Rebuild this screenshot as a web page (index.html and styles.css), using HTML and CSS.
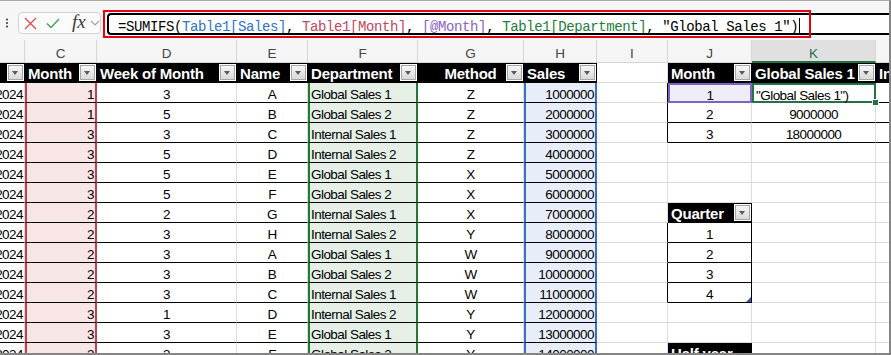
FILE: index.html
```html
<!DOCTYPE html>
<html>
<head>
<meta charset="utf-8">
<link rel="stylesheet" href="styles.css">
</head>
<body>
<div class="frame">
  <div class="fbar">
    <svg class="grip" width="18" height="39" viewBox="0 0 18 39"><circle cx="7" cy="18.5" r="1.1" fill="#444"/><circle cx="7" cy="22" r="1.1" fill="#444"/><circle cx="7" cy="25.5" r="1.1" fill="#444"/></svg>
    <div class="fbox">
      <svg class="ix" width="13" height="13" viewBox="0 0 13 13"><path d="M1 1 L12 12 M12 1 L1 12" stroke="#e5484d" stroke-width="1.3" fill="none"/></svg>
      <svg class="ic" width="14" height="11" viewBox="0 0 14 11"><path d="M1 5.5 L5 9.5 L13 1" stroke="#3f9c50" stroke-width="1.3" fill="none"/></svg>
      <span class="fx">fx</span>
      <svg class="ich" width="10" height="6" viewBox="0 0 10 6"><path d="M1 1 L5 5 L9 1" stroke="#a3a3a3" stroke-width="1.2" fill="none"/></svg>
    </div>
    <div class="finput"><span>=SUMIFS(</span><span class="f1">Table1[Sales]</span>, <span class="f2">Table1[Month]</span>, <span class="f3">[@Month]</span>, <span class="f4">Table1[Department]</span>, "Global Sales 1")<span class="caret"></span></div>
  </div>
  <div class="annot"></div>
  <div class="sheet">
    <div class="grid">
      <!-- column letters -->
      <div class="c h">B</div><div class="c h">C</div><div class="c h">D</div><div class="c h">E</div><div class="c h">F</div><div class="c h">G</div><div class="c h">H</div><div class="c h">I</div><div class="c h">J</div><div class="c h hs">K</div><div class="c h">L</div>
      <!-- table header -->
      <div class="c th"><span class="dd"></span></div>
      <div class="c th">Month<span class="dd"></span></div>
      <div class="c th">Week of Month<span class="dd"></span></div>
      <div class="c th">Name<span class="dd"></span></div>
      <div class="c th">Department<span class="dd"></span></div>
      <div class="c th thc">Method<span class="dd"></span></div>
      <div class="c th">Sales<span class="dd"></span></div>
      <div class="c"></div>
      <div class="c th">Month<span class="dd"></span></div>
      <div class="c th">Global Sales 1<span class="dd"></span></div>
      <div class="c th">Internal Sales 1</div>
      <!-- row 1 -->
      <div class="c t r">2024</div><div class="c t r mo">1</div><div class="c t m">3</div><div class="c t m">A</div><div class="c t l de">Global Sales 1</div><div class="c t m">Z</div><div class="c t r sa">1000000</div>
      <div class="c bk"></div><div class="c t m pu">1</div><div class="c act">"Global Sales 1")</div><div class="c t"></div>
      <!-- row 2 -->
      <div class="c t r">2024</div><div class="c t r mo">1</div><div class="c t m">5</div><div class="c t m">B</div><div class="c t l de">Global Sales 2</div><div class="c t m">Z</div><div class="c t r sa">2000000</div>
      <div class="c bk"></div><div class="c t m">2</div><div class="c t m">9000000</div><div class="c t"></div>
      <!-- row 3 -->
      <div class="c t r">2024</div><div class="c t r mo">3</div><div class="c t m">3</div><div class="c t m">C</div><div class="c t l de">Internal Sales 1</div><div class="c t m">Z</div><div class="c t r sa">3000000</div>
      <div class="c bk"></div><div class="c t m">3</div><div class="c t m">18000000</div><div class="c t"></div>
      <!-- row 4 -->
      <div class="c t r">2024</div><div class="c t r mo">3</div><div class="c t m">5</div><div class="c t m">D</div><div class="c t l de">Internal Sales 2</div><div class="c t m">Z</div><div class="c t r sa">4000000</div>
      <div class="c"></div><div class="c"></div><div class="c"></div><div class="c"></div>
      <!-- row 5 -->
      <div class="c t r">2024</div><div class="c t r mo">3</div><div class="c t m">5</div><div class="c t m">E</div><div class="c t l de">Global Sales 1</div><div class="c t m">X</div><div class="c t r sa">5000000</div>
      <div class="c"></div><div class="c"></div><div class="c"></div><div class="c"></div>
      <!-- row 6 -->
      <div class="c t r">2024</div><div class="c t r mo">3</div><div class="c t m">5</div><div class="c t m">F</div><div class="c t l de">Global Sales 2</div><div class="c t m">X</div><div class="c t r sa">6000000</div>
      <div class="c"></div><div class="c"></div><div class="c"></div><div class="c"></div>
      <!-- row 7 -->
      <div class="c t r">2024</div><div class="c t r mo">2</div><div class="c t m">2</div><div class="c t m">G</div><div class="c t l de">Internal Sales 1</div><div class="c t m">X</div><div class="c t r sa">7000000</div>
      <div class="c"></div><div class="c th">Quarter<span class="dd"></span></div><div class="c"></div><div class="c"></div>
      <!-- row 8 -->
      <div class="c t r">2024</div><div class="c t r mo">2</div><div class="c t m">3</div><div class="c t m">H</div><div class="c t l de">Internal Sales 2</div><div class="c t m">Y</div><div class="c t r sa">8000000</div>
      <div class="c bk"></div><div class="c t m bk">1</div><div class="c"></div><div class="c"></div>
      <!-- row 9 -->
      <div class="c t r">2024</div><div class="c t r mo">2</div><div class="c t m">3</div><div class="c t m">A</div><div class="c t l de">Global Sales 1</div><div class="c t m">W</div><div class="c t r sa">9000000</div>
      <div class="c bk"></div><div class="c t m bk">2</div><div class="c"></div><div class="c"></div>
      <!-- row 10 -->
      <div class="c t r">2024</div><div class="c t r mo">2</div><div class="c t m">3</div><div class="c t m">B</div><div class="c t l de">Global Sales 2</div><div class="c t m">W</div><div class="c t r sa">10000000</div>
      <div class="c bk"></div><div class="c t m bk">3</div><div class="c"></div><div class="c"></div>
      <!-- row 11 -->
      <div class="c t r">2024</div><div class="c t r mo">2</div><div class="c t m">3</div><div class="c t m">C</div><div class="c t l de">Internal Sales 1</div><div class="c t m">W</div><div class="c t r sa">11000000</div>
      <div class="c bk"></div><div class="c t m bk qe">4</div><div class="c"></div><div class="c"></div>
      <!-- row 12 -->
      <div class="c t r">2024</div><div class="c t r mo">3</div><div class="c t m">1</div><div class="c t m">D</div><div class="c t l de">Internal Sales 2</div><div class="c t m">Y</div><div class="c t r sa">12000000</div>
      <div class="c"></div><div class="c"></div><div class="c"></div><div class="c"></div>
      <!-- row 13 -->
      <div class="c t r">2024</div><div class="c t r mo">3</div><div class="c t m">3</div><div class="c t m">E</div><div class="c t l de">Global Sales 1</div><div class="c t m">Y</div><div class="c t r sa">13000000</div>
      <div class="c"></div><div class="c"></div><div class="c"></div><div class="c"></div>
      <!-- row 14 -->
      <div class="c t r">2024</div><div class="c t r mo">3</div><div class="c t m">3</div><div class="c t m">F</div><div class="c t l de">Global Sales 2</div><div class="c t m">Y</div><div class="c t r sa">14000000</div>
      <div class="c"></div><div class="c th">Half year</div><div class="c"></div><div class="c"></div>
    </div>
  </div>
</div>
</body>
</html>
```
FILE: styles.css
```css
body {
  margin: 0;
  background: #fff;
}

.frame {
  width: 891px;
  height: 355px;
  box-sizing: border-box;
  border-top: 1px solid #a9a9a9;
  border-right: 2px solid #858585;
  border-bottom: 2px solid #858585;
  position: relative;
  overflow: hidden;
  font-family: "Liberation Sans", Arial, sans-serif;
}

/* formula bar */
.fbar {
  height: 39px;
  display: flex;
  align-items: flex-start;
  background: #f6f6f6;
}

.grip {
  flex: none;
}

.fbox {
  flex: none;
  margin-top: 11px;
  width: 83px;
  height: 22px;
  box-sizing: border-box;
  border: 1px solid #d4d4d4;
  border-radius: 4px;
  background: #fbfbfb;
  display: flex;
  align-items: center;
  padding-left: 5px;
}

.ix {
  margin-right: 9px;
}

.ic {
  margin-right: 12px;
}

.fx {
  font-family: "Liberation Serif", serif;
  font-style: italic;
  font-size: 19px;
  line-height: 18px;
  color: #3a3a3a;
  margin-right: 4px;
  margin-top: -2px;
}

.finput {
  flex: 1;
  margin-top: 12px;
  margin-left: 6px;
  height: 22px;
  box-sizing: border-box;
  border: 2px solid #000;
  border-right: none;
  border-radius: 4px 0 0 4px;
  background: #fff;
  padding: 3px 0 0 9px;
  font-family: "Liberation Mono", monospace;
  font-size: 14px;
  line-height: 15px;
  letter-spacing: -0.4px;
  white-space: pre;
  color: #000;
  overflow: hidden;
}

.f1 { color: #2f73c9; }
.f2 { color: #c2475a; }
.f3 { color: #8b62c6; }
.f4 { color: #1d7e3c; }

.caret {
  display: inline-block;
  width: 1px;
  height: 16px;
  background: #000;
  vertical-align: -3px;
  margin-left: 1px;
}

.annot {
  position: absolute;
  left: 103px;
  top: 9px;
  width: 708px;
  height: 28px;
  box-sizing: border-box;
  border: 2px solid #e60012;
}

/* sheet */
.sheet {
  height: 313px;
  overflow: hidden;
}

.grid {
  display: grid;
  grid-template-columns: 60px 72px 140px 71px 110px 106px 73px 71px 84px 124px 40px;
  grid-template-rows: 23px;
  grid-auto-rows: 20px;
  margin-left: -35px;
  width: 951px;
}

.c {
  box-sizing: border-box;
  border-right: 1px solid #dcdcdc;
  border-bottom: 1px solid #dcdcdc;
  white-space: nowrap;
  overflow: hidden;
  position: relative;
  font-size: 13.5px;
  line-height: 15px;
  letter-spacing: -0.55px;
  padding: 4px 2px 0 2px;
  color: #000;
}

.h {
  background: #f5f5f5;
  border-color: #d6d6d6;
  text-align: center;
  font-size: 13.5px;
  letter-spacing: 0;
  padding-top: 6px;
  color: #454545;
}

.hs {
  background: #e0e0e0;
  color: #1d6f46;
  border-bottom: 2px solid #217346;
}

.th {
  background: #000;
  border-color: #000;
  color: #fff;
  font-weight: bold;
  font-size: 15px;
  letter-spacing: -0.2px;
  padding: 3px 3px 0 3px;
}

.thc {
  text-align: center;
}

.dd {
  position: absolute;
  right: 1px;
  top: 2px;
  width: 15px;
  height: 15px;
  box-sizing: border-box;
  background: linear-gradient(#f6f6f6, #d9d9d9);
  border: 1px solid #a6a6a6;
  box-shadow: 0 0 0 1px #fff;
}

.dd::after {
  content: "";
  position: absolute;
  left: 3px;
  top: 5px;
  border-left: 3.5px solid transparent;
  border-right: 3.5px solid transparent;
  border-top: 4px solid #5a5a5a;
}

.t {
  border-bottom-color: #000;
}

.l { text-align: left; }
.m { text-align: center; }
.r { text-align: right; padding-right: 1px; }

.mo {
  background: #f8e5e6;
  border-left: 2px solid #c4404c;
  border-right: 2px solid #c4404c;
}

.de {
  background: #e5efe6;
  border-left: 2px solid #1e7b32;
  border-right: 2px solid #1e7b32;
  padding-left: 1px;
}

.sa {
  background: #e8eef9;
  border-left: 2px solid #3b70c8;
  border-right: 2px solid #3b70c8;
}

.bk {
  border-right-color: #000;
}

.pu {
  border: 2px solid #7f61c3;
  background: #efedf7;
  padding-top: 3px;
}

.act {
  border: 2px solid #217346;
  overflow: visible;
  z-index: 2;
  padding: 3px 2px 0 2px;
}

.act::after {
  content: "";
  position: absolute;
  right: -5px;
  bottom: -5px;
  width: 5px;
  height: 5px;
  background: #217346;
  border: 1px solid #fff;
}

.qe::after {
  content: "";
  position: absolute;
  right: 0;
  bottom: 0;
  width: 0;
  height: 0;
  border-left: 5px solid transparent;
  border-bottom: 5px solid #3b4fb0;
}
```
